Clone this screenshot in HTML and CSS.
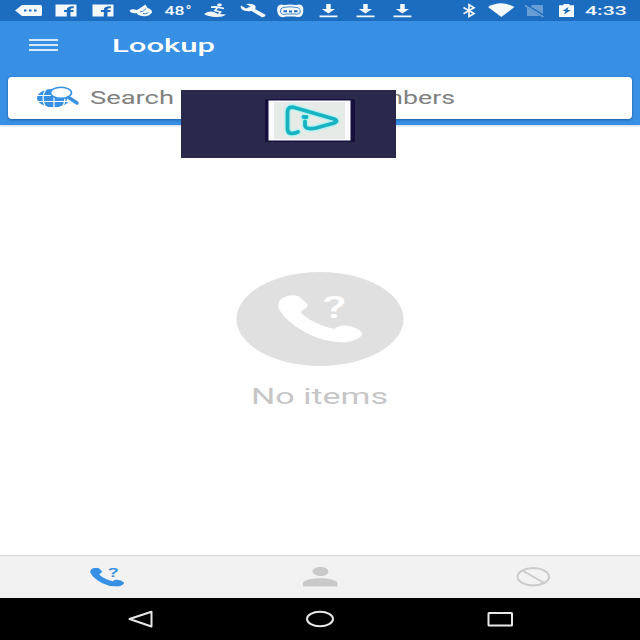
FILE: index.html
```html
<!DOCTYPE html>
<html lang="en">
<head>
<meta charset="utf-8">
<title>Lookup</title>
<link rel="stylesheet" href="styles.css">
</head>
<body>
<svg width="0" height="0" class="defs" aria-hidden="true">
  <symbol id="handset" viewBox="0 0 86 48">
    <path d="M2 6C5 1 17-1 22 2L29 8Q32 11 27 14Q22 16 24 18.500Q37 30 57 34Q61 30 68 30.500Q80 32 85 38Q84 44 71 47Q50 48.500 31 39Q8 27 1 13Q0 9 2 6Z"/>
  </symbol>
  <symbol id="download" viewBox="0 0 28 21">
    <path d="M12.200 4h4.500v5h4.300L14.400 13.500 7.800 9H12.200ZM5.500 15.500h18v1.700H5.500Z"/>
  </symbol>
  <symbol id="facebook" viewBox="0 0 28 21">
    <path fill-rule="evenodd" d="M3.500 4.500H24.500V16.500H18.500V12H21.500V10H18.500C18.500 8.500 19 8.300 21.800 8.300V6.300C17.500 6 14.800 7 14.800 10H12V12H14.800V16.500H3.500Z"/>
  </symbol>
</svg>
<div class="screen">
  <div class="status">
    <div class="notifications">
      <svg viewBox="0 0 28 21"><path fill-rule="evenodd" d="M7 5H25.500Q27 5 27 6.500V14.500Q27 16 25.500 16H7L0 10.500ZM9 9.500v2h2.500v-2ZM14 9.500v2h2.500v-2ZM19 9.500v2h2.500v-2Z"/></svg>
      <svg viewBox="0 0 28 21"><use href="#facebook"/></svg>
      <svg viewBox="0 0 28 21"><use href="#facebook"/></svg>
      <svg viewBox="0 0 28 21"><path d="M2.500 10.500Q5 8.500 10 10L14 7.500 18.500 4.500 20.500 8Q25.500 9.500 25 12.500Q22 17 15.500 16Q11 15.500 9.500 13Q4 14 2.500 10.500Z"/><path class="cut" d="M13 12Q17 11.500 19 8.500M16 13.500Q19 14.500 21.500 12.500"/></svg>
      <svg viewBox="0 0 28 21"><text x="0.500" y="15" font-size="12.500" textLength="20" lengthAdjust="spacingAndGlyphs">48</text><text x="21.500" y="15" font-size="12.500" textLength="6" lengthAdjust="spacingAndGlyphs">°</text></svg>
      <svg viewBox="0 0 28 21"><ellipse cx="18.500" cy="5" rx="2.400" ry="1.400"/><path class="line" d="M10 7.200 15 6.800 23 8.500M17 7 14 10.500 19.500 12 17.500 15"/><path d="M3 14Q8 10.500 13 12L17 14 25 14.500Q22 17.200 15 17Q7 16.500 3 14Z"/></svg>
      <svg viewBox="0 0 28 21"><path d="M2 5.500 7 8.500 11.500 6.500 7 4Q13 2.800 16 5.500Q17.500 7.500 16 9L26.500 14.800Q26.500 17 23 17.300L12.500 11Q6 12 3 9.500Q1 7.500 2 5.500Z"/></svg>
      <svg viewBox="0 0 28 21"><path d="M2 6Q4 3.500 8 5Q14 4 20 5Q25 3.500 27 7Q28 12 26 15.500Q24 18 19 16.500H10Q5 18.500 2.500 15Q0 10 2 6Z"/><path class="cut" d="M7 7.500Q14 6 21 7.500Q25 8 24 13Q22 15 19 14H10Q6 15.500 4.500 12Q4 8 7 7.500Z"/><path class="cut pad" d="M7.500 11.200h3.500M13 11.500h3M18 11.200h3.500"/></svg>
      <svg viewBox="0 0 28 21"><use href="#download"/></svg>
      <svg viewBox="0 0 28 21"><use href="#download"/></svg>
      <svg viewBox="0 0 28 21"><use href="#download"/></svg>
    </div>
    <div class="system">
      <svg viewBox="0 0 28 21"><path class="line" d="M8.500 7.500 19 13.500 14 16.500V4.800L19 7.800 8.500 13.700"/></svg>
      <svg viewBox="0 0 28 21"><path d="M0 7Q13-0.500 26.500 7L13.300 17Z"/></svg>
      <svg viewBox="0 0 28 21" class="faded"><path d="M12 5H23V14L11 6.800ZM7 7.500 20 16H7Z"/><path class="line" d="M5 5.500 23.500 17"/></svg>
      <svg viewBox="0 0 28 21"><path fill-rule="evenodd" d="M6 5.300H10.500V4H16.500V5.300H21V17H6ZM15.500 7 9.500 11H12.500L11 14.500 18 10H14.500Z"/></svg>
    </div>
    <svg class="clock" viewBox="0 0 44 21"><text x="0" y="15.300" font-size="13.200" textLength="42" lengthAdjust="spacingAndGlyphs">4:33</text></svg>
  </div>

  <header class="appbar">
    <div class="titlebar">
      <div class="menu"><i></i><i></i><i></i></div>
      <svg class="title" viewBox="0 0 106 34"><text x="0" y="22.500" textLength="103" lengthAdjust="spacingAndGlyphs">Lookup</text></svg>
    </div>
    <div class="search">
      <svg class="globe" viewBox="0 0 44 22">
        <ellipse class="earth" cx="17.500" cy="11" rx="16.500" ry="9.200"/>
        <path class="grid" d="M0 8.500H36M0 14.500H36M18 1V22M10 2Q4 11 10 21M26 2Q32 11 26 21"/>
        <path class="gap" d="M32 11 42 17"/>
        <path class="handle" d="M33 10.800 41 16"/>
        <ellipse class="lens" cx="25" cy="5.800" rx="10.500" ry="5.500"/>
      </svg>
      <svg class="hint" viewBox="0 0 368 30">
        <text x="0" y="20" textLength="84" lengthAdjust="spacingAndGlyphs">Search</text>
        <text x="260" y="20" textLength="105" lengthAdjust="spacingAndGlyphs">numbers</text>
      </svg>
    </div>
    <div class="badge">
      <svg viewBox="0 0 215 68">
        <rect class="halo" x="84" y="9" width="90" height="43"/>
        <rect class="edge" x="87.500" y="10.500" width="82" height="40"/>
        <rect class="plate" x="93" y="12" width="71" height="37"/>
        <g class="glow"><path d="M117 42Q107 46 106.500 39V22Q107 15 115 18L153 29Q158 31 153 33L135 38Q124 40 124 35V31.500"/><path d="M122.500 27h3"/></g>
        <g class="play"><path d="M117 42Q107 46 106.500 39V22Q107 15 115 18L153 29Q158 31 153 33L135 38Q124 40 124 35V31.500"/><path d="M122.500 27h3"/></g>
      </svg>
    </div>
  </header>

  <main class="empty">
    <svg class="empty-icon" viewBox="0 0 168 94">
      <ellipse cx="84" cy="47" rx="83.500" ry="47"/>
      <use href="#handset" x="41.500" y="23" width="86" height="48"/>
      <text x="87" y="46" font-size="31" textLength="23" lengthAdjust="spacingAndGlyphs">?</text>
    </svg>
    <svg class="empty-text" viewBox="0 0 140 30"><text x="1" y="22" textLength="137" lengthAdjust="spacingAndGlyphs">No items</text></svg>
  </main>

  <nav class="tabs">
    <div><svg class="active" viewBox="0 0 36 22"><use href="#handset" x="1" y="1.500" width="34.500" height="19.300"/><text x="19" y="10.500" font-size="12.500" textLength="10.500" lengthAdjust="spacingAndGlyphs">?</text></svg></div>
    <div><svg viewBox="0 0 36 22"><ellipse cx="18.500" cy="5.500" rx="8" ry="4.500"/><path d="M1 20.500V17C2.500 10.500 34 10.500 35.500 17V20.500Z"/></svg></div>
    <div><svg class="block" viewBox="0 0 36 22"><ellipse cx="18.300" cy="10.700" rx="15.800" ry="8.700"/><path d="M7.500 4.500 29 17"/></svg></div>
  </nav>

  <div class="system-nav">
    <svg viewBox="0 0 36 20"><path d="M7.500 10 29.500 2.800V17.500Z"/></svg>
    <svg viewBox="0 0 36 20"><ellipse cx="18" cy="10" rx="13" ry="7.200"/></svg>
    <svg viewBox="0 0 36 20"><rect x="6.500" y="4" width="23.500" height="12.500" rx="0.500"/></svg>
  </div>
</div>
</body>
</html>
```

FILE: styles.css
```css
* { box-sizing: border-box; }
body { margin: 0; font-family: Roboto, "Liberation Sans", sans-serif; }
svg { display: block; overflow: visible; flex: none; }
.defs { position: absolute; }

.screen { width: 640px; height: 640px; display: flex; flex-direction: column; background: #fff; overflow: hidden; }

.status { height: 21px; flex: none; display: flex; padding-left: 10px; background: #1c6cc0; fill: #f3f8fc; }
.notifications { width: 411px; display: grid; grid-template-columns: repeat(11, 1fr); justify-items: center; }
.system { width: 130px; margin-left: 32px; display: grid; grid-template-columns: repeat(4, 1fr); justify-items: center; }
.notifications svg, .system svg { width: 28px; height: 21px; }
.status text { font-weight: 500; }
.status .line { fill: none; stroke: #f3f8fc; stroke-width: 1.7; }
.status .cut { fill: none; stroke: #1c6cc0; stroke-width: .8; }
.status .pad { stroke-width: 2; }
.status .faded { opacity: .35; }
.clock { width: 44px; height: 21px; margin-left: 2px; }

.appbar { position: relative; height: 104px; flex: none; padding: 0 8px; background: #3790e4; box-shadow: 0 1px 2px rgba(40, 90, 140, .25); }
.titlebar { height: 56px; display: flex; padding: 8px 0 0 21px; }
.menu { width: 29px; margin-top: 10px; display: flex; flex-direction: column; gap: 3px; }
.menu i { height: 2px; background: #d8e9fa; }
.title { width: 106px; height: 34px; margin-left: 54px; fill: #fff; font-size: 18.5px; font-weight: 500; }
.search { height: 42px; display: flex; align-items: center; padding-left: 28px; background: #fff; border-radius: 4px; box-shadow: 0 1px 3px rgba(0, 40, 90, .45); }
.globe { width: 44px; height: 22px; }
.earth { fill: #3790e4; }
.grid { fill: none; stroke: #fff; stroke-width: 1.2; }
.gap { stroke: #fff; stroke-width: 6; }
.handle { stroke: #3790e4; stroke-width: 3.4; stroke-linecap: round; }
.lens { fill: #fff; stroke: #3790e4; stroke-width: 1.6; }
.hint { width: 368px; height: 30px; margin: 2px 0 0 10px; fill: #808080; font-size: 18px; }

.badge { position: absolute; left: 181px; top: 69px; width: 215px; height: 68px; background: #2a284b; }
.halo { fill: #17103d; }
.edge { fill: #fafaff; }
.plate { fill: #e6ebe7; }
.play, .glow { fill: none; stroke: #18b3c2; stroke-width: 3.8; stroke-linecap: round; stroke-linejoin: round; }
.glow { stroke: #b5f1ef; stroke-width: 6.5; }

.empty { flex: 1; display: flex; flex-direction: column; align-items: center; padding-top: 147px; }
.empty-icon { width: 168px; height: 94px; fill: #fff; }
.empty-icon ellipse { fill: #e0e0e0; }
.empty-icon text { font-weight: 500; }
.empty-text { width: 140px; height: 30px; margin-top: 16px; fill: #c6c6c6; font-size: 21.5px; }

.tabs { height: 43px; flex: none; display: grid; grid-template-columns: repeat(3, 1fr); border-top: 1px solid #d5d5d5; background: #f2f2f2; }
.tabs div { display: flex; align-items: center; justify-content: center; }
.tabs svg { width: 36px; height: 22px; fill: #c9c9c9; }
.tabs .active { fill: #3790e4; font-weight: 500; }
.tabs .block { fill: none; stroke: #cbcbcb; stroke-width: 2; }

.system-nav { height: 42px; flex: none; display: flex; justify-content: space-between; align-items: center; padding: 0 122px; background: #000; }
.system-nav svg { width: 36px; height: 20px; fill: none; stroke: #e8e8e8; stroke-width: 2; stroke-linejoin: round; }
```
